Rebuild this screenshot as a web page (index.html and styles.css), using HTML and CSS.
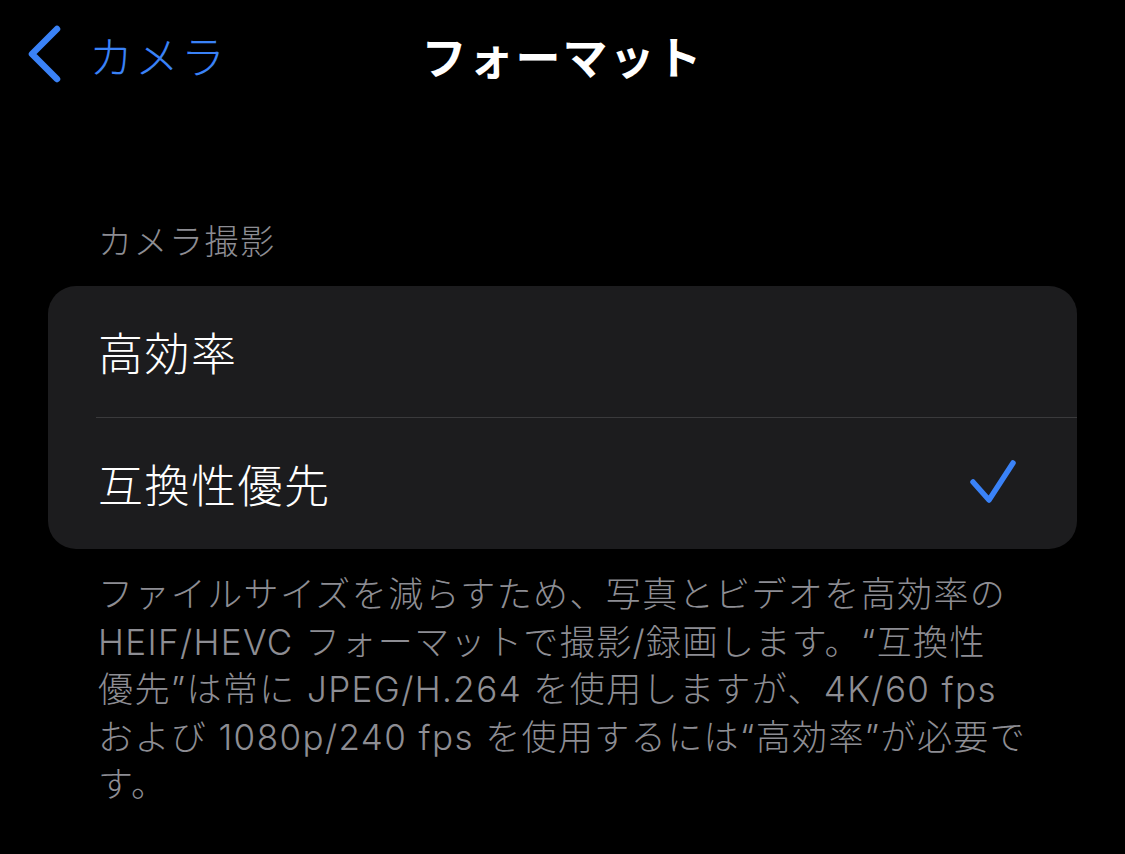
FILE: index.html
```html
<!DOCTYPE html>
<html lang="ja">
<head>
    <meta charset="UTF-8">
    <meta name="viewport" content="width=device-width, initial-scale=1.0">
    <title>フォーマット</title>
    <link rel="stylesheet" href="styles.css">
</head>
<body>
    <div class="nav">
        <a class="back" href="#">
            <svg class="chevron" width="40" height="60" viewBox="0 0 40 60">
                <polyline points="32,4 7,29 32,54" fill="none" stroke="#3a82f7" stroke-width="6.5" stroke-linecap="round" stroke-linejoin="round"/>
            </svg>
            <span>カメラ</span>
        </a>
        <h1 class="title">フォーマット</h1>
        <div></div>
    </div>

    <div class="section">
        <div class="section-header">カメラ撮影</div>
        <div class="card">
            <div class="row">
                <span class="label">高効率</span>
            </div>
            <div class="row">
                <span class="label">互換性優先</span>
                <svg class="check" width="50" height="50" viewBox="0 0 50 50">
                    <polyline points="4,23 20,41 44,4" fill="none" stroke="#3a82f7" stroke-width="5.5" stroke-linecap="round" stroke-linejoin="round"/>
                </svg>
            </div>
        </div>
        <p class="footer">ファイルサイズを減らすため、写真とビデオを高効率の<br>HEIF/HEVC フォーマットで撮影/録画します。“互換性<br>優先”は常に JPEG/H.264 を使用しますが、4K/60 fps<br>および 1080p/240 fps を使用するには“高効率”が必要で<br>す。</p>
    </div>
</body>
</html>
```

FILE: styles.css
```css
body {
    margin: 0;
    padding: 0;
    background-color: #000;
    color: #fff;
    font-family: "Inter", "Noto Sans CJK JP", sans-serif;
    font-weight: 300;
}
.nav {
    display: grid;
    grid-template-columns: 1fr auto 1fr;
    align-items: center;
    height: 110px;
}
.back {
    display: flex;
    align-items: center;
    gap: 24px;
    padding-left: 25px;
    color: #3a82f7;
    text-decoration: none;
    font-size: 44px;
    letter-spacing: 2px;
}
.title {
    margin: 0;
    font-size: 45px;
    font-weight: 700;
    letter-spacing: 2px;
}
.section {
    padding: 0 48px;
}
.section-header {
    margin-top: 108px;
    padding-left: 50px;
    font-size: 34px;
    line-height: 48px;
    letter-spacing: 1.5px;
    color: #8d8d93;
}
.card {
    margin-top: 20px;
    background-color: #1c1c1e;
    border-radius: 28px;
    padding-left: 48px;
}
.row {
    display: flex;
    align-items: center;
    justify-content: space-between;
    height: 131px;
    padding-right: 58px;
}
.row + .row {
    border-top: 1px solid #3a3a3c;
}
.label {
    font-size: 45px;
    padding-left: 2px;
    letter-spacing: 1.5px;
}
.check {
    display: block;
}
.footer {
    margin: 22px 0 0;
    padding-left: 50px;
    font-size: 35px;
    line-height: 47.5px;
    letter-spacing: 1.4px;
    color: #8d8d93;
}
```
